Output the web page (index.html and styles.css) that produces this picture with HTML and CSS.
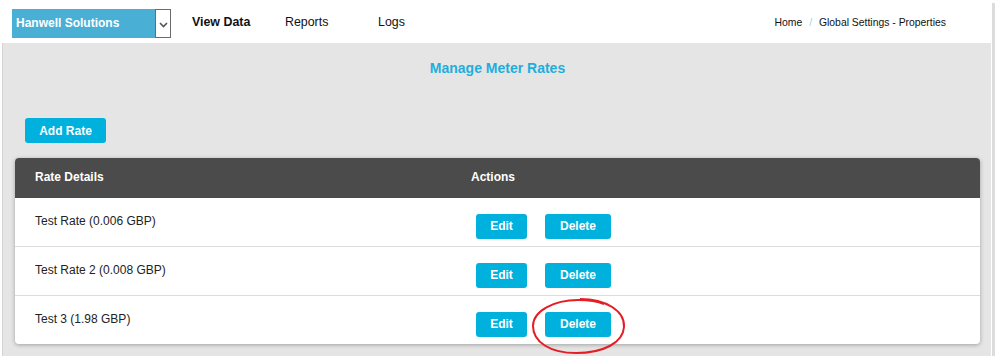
FILE: index.html
```html
<!DOCTYPE html>
<html lang="en">
<head>
    <meta charset="UTF-8">
    <title>Manage Meter Rates</title>
    <link rel="stylesheet" href="styles.css">
</head>
<body>
    <div class="page">
        <div class="app">
            <div class="topbar">
                <div class="siteSelect">
                    <span class="siteName">Hanwell Solutions</span>
                    <span class="siteArrow">
                        <svg width="9" height="6" viewBox="0 0 9 6"><path d="M1 1 L4.5 4.5 L8 1" fill="none" stroke="#555" stroke-width="1.6"/></svg>
                    </span>
                </div>
                <nav class="mainNav">
                    <a class="navItem active">View Data</a>
                    <a class="navItem">Reports</a>
                    <a class="navItem">Logs</a>
                </nav>
                <div class="breadcrumb">
                    <span>Home</span>
                    <span class="crumbSep">/</span>
                    <span>Global Settings - Properties</span>
                </div>
            </div>

            <div class="content">
                <h1 class="pageTitle">Manage Meter Rates</h1>
                <div class="toolbar">
                    <button class="btn btnAdd">Add Rate</button>
                </div>

                <div class="rateTable">
                    <div class="rateRow rateHead">
                        <div class="cell">Rate Details</div>
                        <div class="cell">Actions</div>
                    </div>
                    <div class="rateRow">
                        <div class="cell">Test Rate (0.006 GBP)</div>
                        <div class="cell actions">
                            <button class="btn btnEdit">Edit</button>
                            <button class="btn btnDelete">Delete</button>
                        </div>
                    </div>
                    <div class="rateRow">
                        <div class="cell">Test Rate 2 (0.008 GBP)</div>
                        <div class="cell actions">
                            <button class="btn btnEdit">Edit</button>
                            <button class="btn btnDelete">Delete</button>
                        </div>
                    </div>
                    <div class="rateRow">
                        <div class="cell">Test 3 (1.98 GBP)</div>
                        <div class="cell actions">
                            <button class="btn btnEdit">Edit</button>
                            <button class="btn btnDelete">Delete</button>
                            <!-- red marker drawn over the last delete button -->
                            <svg class="markCircle" width="98" height="60" viewBox="0 0 98 60">
                                <path d="M50 2 C76 2 95 14 94 30 C93 46 73 56 46 56 C20 56 3 45 3 29 C3 14 24 3 48 3 C58 3 67 4 74 7" fill="none" stroke="#e31e24" stroke-width="2"/>
                            </svg>
                        </div>
                    </div>
                </div>
            </div>
        </div>
        <div class="scrollTrack"></div>
    </div>
</body>
</html>
```

FILE: styles.css
```css
* {
    margin: 0;
    padding: 0;
    box-sizing: border-box;
}

body {
    font-family: "Liberation Sans", Arial, sans-serif;
    background-color: #fff;
    color: #222;
    width: 998px;
    height: 363px;
    overflow: hidden;
}

.page {
    display: flex;
    height: 356px;
}

.app {
    flex: 1;
    display: flex;
    flex-direction: column;
}

.scrollTrack {
    width: 3px;
    margin: 3px 3px 0 1px;
    background-color: #dcdcdc;
}

.topbar {
    height: 43px;
    flex-shrink: 0;
    display: flex;
    align-items: center;
    padding-left: 12px;
    padding-top: 4px;
}

.siteSelect {
    display: flex;
    height: 29px;
    width: 159px;
}

.siteName {
    flex: 1;
    background-color: #4aafd5;
    color: #fff;
    font-size: 12px;
    font-weight: bold;
    line-height: 29px;
    padding-left: 4px;
}

.siteArrow {
    width: 16px;
    border: 1px solid #6b6b6b;
    display: flex;
    align-items: center;
    justify-content: center;
    padding-top: 2px;
}

.mainNav {
    display: flex;
    margin-left: 21px;
    margin-bottom: 3px;
}

.navItem {
    font-size: 12.4px;
    color: #111;
    width: 93px;
}

.navItem.active {
    font-weight: bold;
}

.breadcrumb {
    margin-left: auto;
    margin-right: 45px;
    margin-bottom: 3px;
    font-size: 10.4px;
    color: #111;
}

.crumbSep {
    color: #9fd3e8;
    margin: 0 4px;
}

.content {
    flex: 1;
    background-color: #e5e5e5;
    margin-left: 2px;
    border-left: 1px solid #d4d4d4;
    padding: 0 11px 11px 12px;
}

.pageTitle {
    font-size: 14px;
    font-weight: bold;
    color: #1eaedc;
    text-align: center;
    line-height: 16px;
    margin-top: 17px;
}

.toolbar {
    padding: 42px 0 0 10px;
    height: 82px;
}

.btn {
    font-family: "Liberation Sans", Arial, sans-serif;
    font-size: 12px;
    font-weight: bold;
    color: #fff;
    background-color: #00b1de;
    border: none;
    border-radius: 3px;
    height: 25px;
    padding: 0 15px;
    cursor: pointer;
}

.btnAdd {
    width: 81px;
    padding: 0;
}

.rateTable {
    background-color: #fff;
    border-radius: 4px;
    box-shadow: 0 1px 4px rgba(0, 0, 0, 0.3);
}

.rateRow {
    display: grid;
    grid-template-columns: 436px 1fr;
    height: 49px;
    border-bottom: 1px solid #dcdcdc;
    font-size: 12px;
}

.rateRow:last-child {
    border-bottom: none;
    height: 48px;
}

.rateHead {
    height: 40px;
    background-color: #4b4b4b;
    color: #fff;
    font-weight: bold;
    border-radius: 4px 4px 0 0;
    border-bottom: none;
}

.cell {
    display: flex;
    align-items: center;
    padding-left: 20px;
    padding-bottom: 2px;
}

.actions {
    position: relative;
    padding-left: 25px;
    padding-top: 8px;
    padding-bottom: 0;
}

.btnEdit {
    width: 51px;
    padding: 0;
}

.btnDelete {
    width: 66px;
    padding: 0;
    margin-left: 18px;
}

.markCircle {
    position: absolute;
    left: 79px;
    top: 1px;
}
```
